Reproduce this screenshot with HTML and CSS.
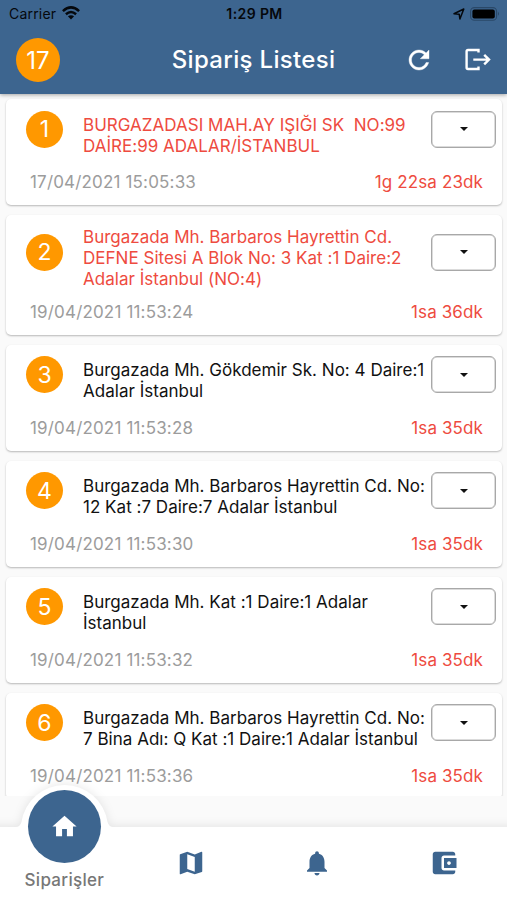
FILE: index.html
```html
<!DOCTYPE html>
<html lang="tr">
<head>
<meta charset="utf-8">
<title>Sipariş Listesi</title>
<link rel="stylesheet" href="styles.css">
</head>
<body>
<div class="screen">
  <header class="header">
    <div class="status">
      <div class="carrier"><span>Carrier</span>
        <svg width="18" height="14" viewBox="0 0 18 14"><g fill="none" stroke="#05080c" stroke-width="2.5"><path d="M.9 5.1Q9-2.3 17.1 5.1"/><path d="M3.9 8.2Q9 3.8 14.1 8.2"/></g><path d="M5.900 10.300Q9 8 12.100 10.300L9 13.500z" fill="#05080c"/></svg>
      </div>
      <div class="clock">1:29 PM</div>
      <div class="power">
        <svg width="12" height="12" viewBox="0 0 12 12"><path d="M1 5.7 10.8 1 6.9 11 6.2 6.2z" fill="none" stroke="#05080c" stroke-width="1.5" stroke-linejoin="round"/></svg>
        <svg width="30" height="14" viewBox="0 0 30 14"><rect x=".6" y=".6" width="26" height="12.6" rx="3.8" fill="none" stroke="#2a4868" stroke-width="1.1"/><rect x="2.4" y="2.4" width="22.4" height="9" rx="2" fill="#000"/><path d="M28 4.8q2 2 0 4z" fill="#2a4868"/></svg>
      </div>
    </div>
    <div class="bar">
      <div class="count">17</div>
      <h1 class="title">Sipariş Listesi</h1>
      <div class="actions">
        <svg width="30" height="30" viewBox="0 0 24 24"><path fill="#fff" stroke="#fff" stroke-width=".3" d="M17.65 6.35C16.2 4.9 14.21 4 12 4c-4.42 0-7.99 3.58-7.99 8s3.57 8 7.99 8c3.73 0 6.84-2.55 7.73-6h-2.08c-.82 2.33-3.04 4-5.65 4-3.31 0-6-2.69-6-6s2.69-6 6-6c1.66 0 3.14.69 4.22 1.78L13 11h7V4l-2.35 2.35z"/></svg>
        <svg width="26" height="24" viewBox="0 0 26 24"><path d="M13.500 4.600V2H3Q1.600 2 1.600 3.400v16.200Q1.600 21 3 21h10.500v-2.600M8.300 11.600H24M19.200 6.900 24 11.600l-4.800 4.700" fill="none" stroke="#fff" stroke-width="2.400"/></svg>
      </div>
    </div>
  </header>

  <main class="list">
    <article class="card late">
      <div class="head"><div class="num">1</div><p class="address">BURGAZADASI MAH.AY IŞIĞI SK&nbsp; NO:99<br>DAİRE:99 ADALAR/İSTANBUL</p><div class="select"><i></i></div></div>
      <div class="foot"><time>17/04/2021 15:05:33</time><span class="elapsed">1g 22sa 23dk</span></div>
    </article>
    <article class="card late">
      <div class="head"><div class="num">2</div><p class="address">Burgazada Mh. Barbaros Hayrettin Cd.<br>DEFNE Sitesi A Blok No: 3 Kat :1 Daire:2<br>Adalar İstanbul (NO:4)</p><div class="select"><i></i></div></div>
      <div class="foot"><time>19/04/2021 11:53:24</time><span class="elapsed">1sa 36dk</span></div>
    </article>
    <article class="card">
      <div class="head"><div class="num">3</div><p class="address">Burgazada Mh. Gökdemir Sk. No: 4 Daire:1<br>Adalar İstanbul</p><div class="select"><i></i></div></div>
      <div class="foot"><time>19/04/2021 11:53:28</time><span class="elapsed">1sa 35dk</span></div>
    </article>
    <article class="card">
      <div class="head"><div class="num">4</div><p class="address">Burgazada Mh. Barbaros Hayrettin Cd. No:<br>12 Kat :7 Daire:7 Adalar İstanbul</p><div class="select"><i></i></div></div>
      <div class="foot"><time>19/04/2021 11:53:30</time><span class="elapsed">1sa 35dk</span></div>
    </article>
    <article class="card">
      <div class="head"><div class="num">5</div><p class="address">Burgazada Mh. Kat :1 Daire:1 Adalar<br>İstanbul</p><div class="select"><i></i></div></div>
      <div class="foot"><time>19/04/2021 11:53:32</time><span class="elapsed">1sa 35dk</span></div>
    </article>
    <article class="card">
      <div class="head"><div class="num">6</div><p class="address">Burgazada Mh. Barbaros Hayrettin Cd. No:<br>7 Bina Adı: Q Kat :1 Daire:1 Adalar İstanbul</p><div class="select"><i></i></div></div>
      <div class="foot"><time>19/04/2021 11:53:36</time><span class="elapsed">1sa 35dk</span></div>
    </article>
  </main>

  <nav class="nav">
    <svg class="nav-shape" width="507" height="134" viewBox="0 0 507 134"><path fill="#fff" d="M-20 61H16Q20 61 21.500 56A43.500 43.500 0 0 1 107.500 56Q109 61 113 61H527V150H-20z"/></svg>
    <div class="tab active">
      <div class="home"><svg width="29" height="29" viewBox="0 0 24 24"><path fill="#fff" d="M10 20v-6h4v6h5v-8h3L12 3 2 12h3v8z"/></svg></div>
      <span>Siparişler</span>
    </div>
    <div class="tab"><svg width="30" height="30" viewBox="0 0 24 24"><path d="m20.500 3-.16.030L15 5.100 9 3 3.360 4.900c-.21.070-.36.250-.36.480V20.500c0 .280.220.500.500.500l.160-.030L9 18.900l6 2.100 5.640-1.900c.210-.070.360-.250.360-.480V3.500c0-.280-.220-.500-.500-.500zM15 19l-6-2.110V5l6 2.110V19z"/></svg></div>
    <div class="tab"><svg width="30" height="30" viewBox="0 0 24 24"><path d="M12 22c1.100 0 2-.9 2-2h-4c0 1.100.890 2 2 2zm6-6v-5c0-3.070-1.640-5.640-4.500-6.320V4c0-.830-.670-1.500-1.500-1.500s-1.500.670-1.500 1.500v.680C7.630 5.360 6 7.920 6 11v5l-2 2v1h16v-1l-2-2z"/></svg></div>
    <div class="tab"><svg width="30" height="30" viewBox="0 0 24 24"><path d="M21 18v1c0 1.100-.9 2-2 2H5c-1.110 0-2-.9-2-2V5c0-1.100.890-2 2-2h14c1.100 0 2 .9 2 2v1h-9c-1.110 0-2 .9-2 2v8c0 1.100.890 2 2 2h9zm-9-2h10V8H12v8zm4-2.500c-.830 0-1.500-.670-1.500-1.500s.670-1.500 1.500-1.500 1.500.670 1.500 1.500-.670 1.500-1.500 1.500z"/></svg></div>
  </nav>
</div>
</body>
</html>
```
FILE: styles.css
```css
* { box-sizing: border-box; }
body { margin: 0; font-family: Inter, sans-serif; background: #fafafa; }
svg { display: block; }
.screen { height: 900px; width: 507px; overflow: hidden; display: flex; flex-direction: column; position: relative; }

.header { height: 94px; flex: none; background: #3d658f; color: #fff; box-shadow: 0 1px 4px rgba(0,0,0,.35); position: relative; z-index: 1; }
.status { height: 27px; display: grid; grid-template-columns: 1fr auto 1fr; align-items: center; padding: 0 7px 0 9px; font-size: 14px; color: #05080c; }
.carrier { display: flex; align-items: center; gap: 6px; letter-spacing: .2px; }
.carrier svg { margin-top: -1px; }
.clock { font-weight: 600; letter-spacing: .4px; }
.power { display: flex; justify-content: flex-end; align-items: center; gap: 5px; }
.bar { height: 66px; display: grid; grid-template-columns: 1fr auto 1fr; align-items: center; padding: 0 16px; }
.count { width: 44px; height: 44px; border-radius: 50%; background: #ff9800; display: grid; place-items: center; font-size: 24px; }
.title { margin: 0 0 1px; font-size: 24px; font-weight: 500; letter-spacing: .32px; }
.actions { display: flex; justify-content: flex-end; align-items: center; gap: 31px; }

.list { height: 702px; flex: none; overflow: hidden; padding: 5.3px 5px 0 6px; }
.card { background: #fff; border-radius: 5px; margin-bottom: 10px; box-shadow: 0 1px 2px rgba(0,0,0,.27); color: #111; }
.head { min-height: 60px; display: grid; grid-template-columns: 37px 368px 65px; align-items: center; padding-left: 20px; }
.num { width: 37px; height: 37px; border-radius: 50%; background: #ff9800; color: #fff; display: grid; place-items: center; font-size: 23px; }
.address { margin: 12px 0 -.9px 20px; font-size: 17px; line-height: 20.8px; letter-spacing: .02px; white-space: nowrap; }
.late .address, .elapsed { color: #ee4b40; }
.select { width: 65px; height: 37px; border: 1px solid #a8a8a8; box-shadow: inset 0 0 0 .5px #b8b8b8; border-radius: 6px; display: grid; place-items: center; }
.select i { border: 4px solid transparent; border-top: 4px solid #111; border-bottom: 0; }
.foot { height: 46px; display: flex; justify-content: space-between; align-items: center; padding: 0 19px 0 24px; font-size: 17px; }
.foot time { color: #9c9c9c; letter-spacing: .17px; }
.elapsed { letter-spacing: .12px; }

.nav { position: absolute; left: 0; bottom: 0; width: 507px; height: 134px; display: grid; grid-template-columns: repeat(4, 1fr); align-items: start; z-index: 2; }
.nav-shape { position: absolute; inset: 0; overflow: visible; filter: drop-shadow(0 -1px 5px rgba(0,0,0,.09)); z-index: -1; }
.tab { display: flex; flex-direction: column; align-items: center; padding: 82px 0 0 1px; }
.tab path { fill: #3d658f; }
.active { padding: 24px 0 0 2px; font-size: 17px; font-weight: 500; letter-spacing: .3px; color: #777; }
.tab.active path { fill: #fff; }
.home { width: 73px; height: 73px; border-radius: 50%; background: #3d658f; display: grid; place-items: center; margin-bottom: 7px; }
```
